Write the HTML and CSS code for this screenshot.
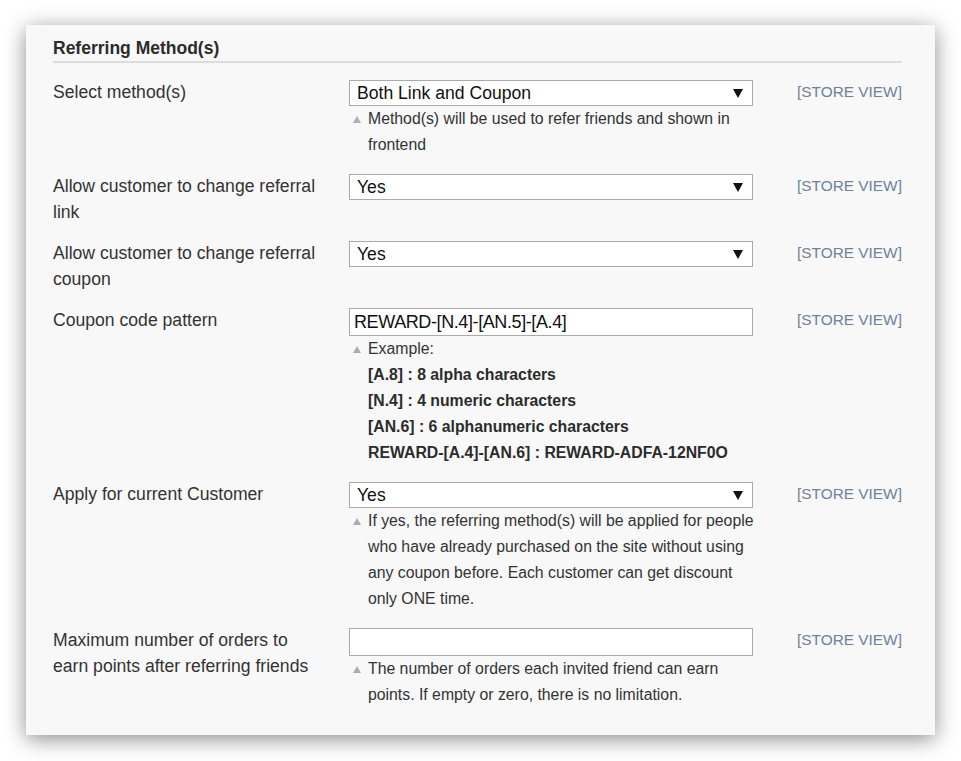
FILE: index.html
```html
<!DOCTYPE html>
<html>
<head>
<meta charset="utf-8">
<link rel="stylesheet" href="styles.css">
</head>
<body>
<div class="panel">
  <h2 class="heading">Referring Method(s)</h2>

  <div class="row">
    <div class="label">Select method(s)</div>
    <div class="value">
      <div class="select"><span>Both Link and Coupon</span><i class="arrow"></i></div>
      <p class="note"><i class="tri"></i>Method(s) will be used to refer friends and shown in frontend</p>
    </div>
    <div class="scope">[STORE VIEW]</div>
  </div>

  <div class="row">
    <div class="label">Allow customer to change referral link</div>
    <div class="value">
      <div class="select"><span>Yes</span><i class="arrow"></i></div>
    </div>
    <div class="scope">[STORE VIEW]</div>
  </div>

  <div class="row">
    <div class="label">Allow customer to change referral coupon</div>
    <div class="value">
      <div class="select"><span>Yes</span><i class="arrow"></i></div>
    </div>
    <div class="scope">[STORE VIEW]</div>
  </div>

  <div class="row">
    <div class="label">Coupon code pattern</div>
    <div class="value">
      <div class="input">REWARD-[N.4]-[AN.5]-[A.4]</div>
      <div class="note"><i class="tri"></i>Example:<br>
        <b>[A.8] : 8 alpha characters</b><br>
        <b>[N.4] : 4 numeric characters</b><br>
        <b>[AN.6] : 6 alphanumeric characters</b><br>
        <b>REWARD-[A.4]-[AN.6] : REWARD-ADFA-12NF0O</b>
      </div>
    </div>
    <div class="scope">[STORE VIEW]</div>
  </div>

  <div class="row">
    <div class="label">Apply for current Customer</div>
    <div class="value">
      <div class="select"><span>Yes</span><i class="arrow"></i></div>
      <p class="note"><i class="tri"></i>If yes, the referring method(s) will be applied for people who have already purchased on the site without using any coupon before. Each customer can get discount only ONE time.</p>
    </div>
    <div class="scope">[STORE VIEW]</div>
  </div>

  <div class="row">
    <div class="label">Maximum number of orders to earn points after referring friends</div>
    <div class="value">
      <div class="input"></div>
      <p class="note"><i class="tri"></i>The number of orders each invited friend can earn points. If empty or zero, there is no limitation.</p>
    </div>
    <div class="scope">[STORE VIEW]</div>
  </div>
</div>
</body>
</html>
```

FILE: styles.css
```css
html, body {
  margin: 0;
  padding: 0;
  background: #ffffff;
}

body {
  font-family: "Liberation Sans", Arial, sans-serif;
  color: #333333;
  padding: 25px 0 26px 26px;
}

.panel {
  box-sizing: border-box;
  width: 909px;
  height: 710px;
  background: #f8f8f8;
  box-shadow: 0 4px 20px rgba(0, 0, 0, 0.45);
  padding: 13px 33px 0 27px;
}

.heading {
  margin: 0;
  font-size: 17.5px;
  font-weight: bold;
  line-height: 20px;
  color: #2b2b2b;
  padding-bottom: 3px;
  border-bottom: 2px solid #dcdcdc;
  margin-bottom: 16px;
}

.row {
  display: grid;
  grid-template-columns: 296px 404px 1fr;
  margin-bottom: 15px;
}

.label {
  width: 268px;
  font-size: 17.6px;
  line-height: 26px;
  color: #333333;
}

.value {
  min-width: 0;
  padding-top: 1px;
}

.select,
.input {
  box-sizing: border-box;
  height: 26px;
  background: #ffffff;
  border: 1px solid #aaaaaa;
  display: flex;
  align-items: center;
  justify-content: space-between;
  padding: 0 9px 0 7px;
  font-size: 17.6px;
  color: #111111;
}

.input {
  height: 28px;
  padding-left: 4px;
  font-size: 18px;
  letter-spacing: -0.4px;
}

.arrow {
  width: 0;
  height: 0;
  border-left: 5px solid transparent;
  border-right: 5px solid transparent;
  border-top: 9px solid #111111;
}

.note {
  margin: 0;
  position: relative;
  width: 410px;
  padding-left: 19px;
  box-sizing: border-box;
  font-size: 15.8px;
  line-height: 26px;
  color: #333333;
}

.note b {
  color: #2b2b2b;
}

.tri {
  position: absolute;
  left: 4px;
  top: 10px;
  width: 0;
  height: 0;
  border-left: 4px solid transparent;
  border-right: 4px solid transparent;
  border-bottom: 7px solid #a3afba;
}

.scope {
  margin-left: 44px;
  font-size: 15.4px;
  line-height: 25px;
  white-space: nowrap;
  color: #6f8299;
}
```
